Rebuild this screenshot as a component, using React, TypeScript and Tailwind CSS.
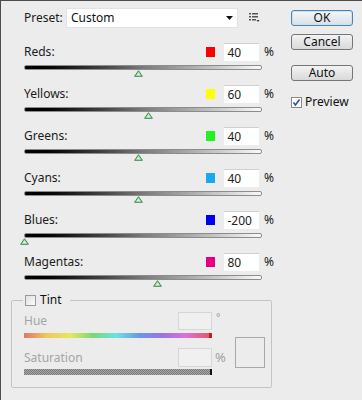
const channels = [
  { name: 'Reds', swatch: 'bg-[#ff0000]', value: 40 },
  { name: 'Yellows', swatch: 'bg-[#ffff00]', value: 60 },
  { name: 'Greens', swatch: 'bg-[#22f022]', value: 40 },
  { name: 'Cyans', swatch: 'bg-[#1aa8ee]', value: 40 },
  { name: 'Blues', swatch: 'bg-[#0000f2]', value: -200 },
  { name: 'Magentas', swatch: 'bg-[#e6007e]', value: 80 },
];

const TRACK = 238;

const Thumb = ({ value }: { value: number }) => {
  const left = ((value + 200) / 500) * TRACK - 4;
  return (
    <svg width="9" height="7" viewBox="0 0 9 7" className="absolute top-0" style={{ left }}>
      <path d="M4.5 0.7 L8.4 6.3 L0.6 6.3 Z" fill="#a6dcae" stroke="#3f8b4c" strokeWidth="1" />
      <path d="M4.5 3 L6.2 5.2 L2.8 5.2 Z" fill="#e4f6e6" />
    </svg>
  );
};

const ChannelRow = ({ name, swatch, value }: { name: string; swatch: string; value: number }) => (
  <div className="w-[250px]">
    <div className="flex items-center h-[18px]">
      <span className="w-[184px] text-[#1b1b1b]">{name}:</span>
      <span className={`w-[10px] h-[10px] ${swatch}`} />
      <div className="ml-[9px] w-[35px] h-[18px] bg-white border-t border-[#d0d0d0] pl-[3px] leading-[17px] text-[#222]">
        {value}
      </div>
      <span className="ml-[5px] text-[#222]">%</span>
    </div>
    <div className="mt-[4px] w-[238px]">
      <div className="h-[5px] rounded-[2px] border border-[#8c8c8c] bg-gradient-to-r from-[#000] via-[#7a7a7a] to-[#fafafa]" />
      <div className="relative h-[7px]">
        <Thumb value={value} />
      </div>
    </div>
  </div>
);

const PresetMenuIcon = () => (
  <svg width="11" height="10" viewBox="0 0 11 10">
    <rect x="0" y="0" width="2" height="1.5" fill="#555" />
    <rect x="3" y="0" width="6" height="1.5" fill="#555" />
    <rect x="0" y="3" width="2" height="1.5" fill="#555" />
    <rect x="3" y="3" width="6" height="1.5" fill="#555" />
    <rect x="0" y="6" width="2" height="1.5" fill="#555" />
    <rect x="3" y="6" width="4" height="1.5" fill="#555" />
    <path d="M7.5 7 L10.5 7 L9 9 Z" fill="#333" />
  </svg>
);

const DialogButton = ({ label, primary }: { label: string; primary?: boolean }) => (
  <button
    className={`w-[62px] h-[16px] rounded-[3px] border text-[12px] leading-none text-[#111] bg-gradient-to-b ${
      primary
        ? 'border-[#4a86b4] from-[#f4f7fa] to-[#d9e0e6] shadow-[inset_0_0_0_1px_#c6e2f4]'
        : 'border-[#767676] from-[#f3f3f3] to-[#d9d9d9]'
    }`}
  >
    {label}
  </button>
);

export default function App() {
  return (
    <div className="w-[362px] h-[400px] bg-[#ececec] border-t border-l border-[#4c4c4c] flex font-['Noto_Sans','Open_Sans',sans-serif] text-[12px]">
      <div className="w-[290px] pl-[10px] pt-[7px]">
        <div className="pl-[13px]">
          <div className="flex items-center h-[20px]">
            <span className="w-[42px] text-[#1b1b1b]">Preset:</span>
            <div className="w-[172px] h-[20px] bg-white border border-[#e2e2e2] flex items-center pl-[4px] pr-[4px]">
              <span className="flex-1 text-[#111]">Custom</span>
              <svg width="7" height="4" viewBox="0 0 7 4">
                <path d="M0 0 L7 0 L3.5 4 Z" fill="#111" />
              </svg>
            </div>
            <span className="ml-[11px] flex items-center">
              <PresetMenuIcon />
            </span>
          </div>

          <div className="mt-[15px] flex flex-col gap-[8px]">
            {channels.map((c) => (
              <ChannelRow key={c.name} {...c} />
            ))}
          </div>
        </div>

        <fieldset className="mt-[6px] w-[261px] border border-[#c4c4c4] rounded-[2px] p-0">
          <legend className="ml-[11px] pl-[2px] pr-[8px] h-[14px] flex items-center">
            <span className="w-[11px] h-[11px] border border-[#9a9a9a] bg-gradient-to-br from-[#e2e2e2] to-[#fafafa]" />
            <span className="ml-[4px] text-[#111]">Tint</span>
          </legend>
          <div className="flex items-start pl-[12px] pt-[5px] pb-[12px]">
            <div className="w-[211px]">
              <div className="flex items-center h-[18px]">
                <span className="w-[154px] text-[#a5a5a5]">Hue</span>
                <div className="w-[34px] h-[18px] border border-[#d6d6d6] bg-[#f0f0f0]" />
                <span className="ml-[4px] self-start -mt-[2px] text-[10px] text-[#9a9a9a]">°</span>
              </div>
              <div className="mt-[3px] w-[188px] h-[5px] flex">
                <div className="flex-1 [background-image:linear-gradient(to_right,#e07868,#eec860,#e6e85c,#78d878,#6ee0e0,#6c96e4,#9c74e0,#dc72d8,#e05a70)]" />
                <div className="w-[3px] bg-[#c81818]" />
              </div>
              <div className="flex items-center h-[19px] mt-[10px]">
                <span className="w-[154px] text-[#a5a5a5]">Saturation</span>
                <div className="w-[34px] h-[19px] border border-[#d6d6d6] bg-[#f0f0f0]" />
                <span className="ml-[3px] text-[13px] text-[#a0a0a0]">%</span>
              </div>
              <div className="mt-[2px] w-[188px] h-[6px] flex">
                <div className="flex-1 bg-[repeating-conic-gradient(#7a7a7a_0_25%,#a8a8a8_0_50%)] bg-[length:2px_2px]" />
                <div className="w-[2px] bg-[#111]" />
              </div>
            </div>
            <div className="mt-[25px] w-[30px] h-[31px] border border-[#a9a9a9]" />
          </div>
        </fieldset>
      </div>

      <div className="w-[62px] pt-[9px] flex flex-col">
        <DialogButton label="OK" primary />
        <div className="mt-[8px] flex">
          <DialogButton label="Cancel" />
        </div>
        <div className="mt-[15px] flex">
          <DialogButton label="Auto" />
        </div>
        <div className="mt-[12px] flex items-center">
          <span className="w-[11px] h-[11px] border border-[#8a8a8a] bg-white flex items-center justify-center">
            <svg width="9" height="9" viewBox="0 0 9 9">
              <path d="M1.5 4.5 L3.5 7 L7.5 1.5" fill="none" stroke="#2b4f9e" strokeWidth="1.6" />
            </svg>
          </span>
          <span className="ml-[3px] text-[#111]">Preview</span>
        </div>
      </div>
    </div>
  );
}
